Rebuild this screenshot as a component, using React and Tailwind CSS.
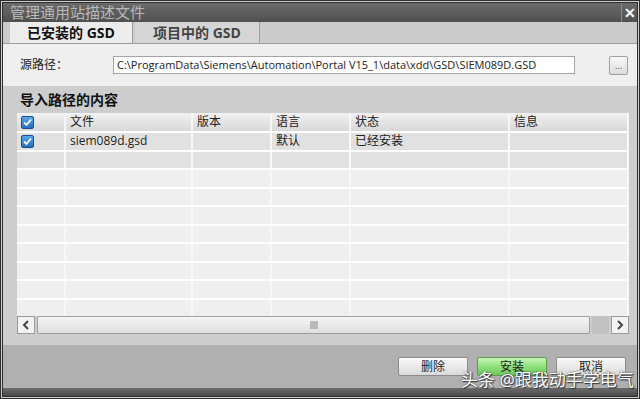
import React from 'react';

const FONT = { fontFamily: '"Open Sans", "Noto Sans CJK SC", sans-serif' };

const columns = [
  { key: 'check', label: '', width: 'w-[49px]' },
  { key: 'file', label: '文件', width: 'w-[127px]' },
  { key: 'version', label: '版本', width: 'w-[79px]' },
  { key: 'lang', label: '语言', width: 'w-[79px]' },
  { key: 'state', label: '状态', width: 'w-[159px]' },
  { key: 'info', label: '信息', width: 'flex-1' },
];

const rows = [
  { file: 'siem089d.gsd', version: '', lang: '默认', state: '已经安装', info: '', checked: true },
  { empty: true, dark: true },
  ...Array.from({ length: 8 }, () => ({ empty: true })),
];

function CheckBox() {
  return (
    <span className="flex h-[13px] w-[13px] items-center justify-center rounded-[2px] border border-[#1d4f8a] bg-gradient-to-b from-[#5aa6e6] to-[#1f6fc2]">
      <svg width="9" height="9" viewBox="0 0 9 9">
        <path d="M1 4.5 L3.5 7 L8 1.5" stroke="#fff" strokeWidth="1.8" fill="none" />
      </svg>
    </span>
  );
}

function FooterButton({ label, green }) {
  return (
    <button
      className={`flex h-[19px] w-[70px] items-center justify-center rounded-[2px] border text-[12px] text-[#222] ${
        green
          ? 'border-[#5c9a4e] bg-gradient-to-b from-[#c9f5b8] via-[#8fe07a] to-[#6cc95a]'
          : 'border-[#8c8c8c] bg-gradient-to-b from-[#fbfbfb] to-[#d9d9d9]'
      }`}
    >
      {label}
    </button>
  );
}

export default function App() {
  return (
    <div className="relative h-[399px] w-[640px] overflow-hidden border-[3px] border-double border-[#2e2e2e] bg-[#cdcdcd]" style={FONT}>
      {/* title bar */}
      <div className="flex h-[19px] items-center justify-between bg-gradient-to-b from-[#6a6a6a] to-[#505050]">
        <span className="pl-[7px] text-[15px] leading-none text-[#b9b9b9]">管理通用站描述文件</span>
        <span className="flex h-[19px] w-[16px] items-center justify-center border-l border-[#8a8a8a] text-[14px] font-bold text-white">✕</span>
      </div>

      {/* tabs */}
      <div className="flex h-[22px] items-end border-b border-[#9e9e9e] bg-[#cbcbcb] pl-[7px]">
        <div className="flex h-[21px] w-[123px] items-center justify-center border-r border-[#9e9e9e] bg-[#ececec] text-[14px] font-bold text-[#111]">
          已安装的 GSD
        </div>
        <div className="ml-[2px] flex h-[21px] w-[125px] items-center justify-center border-r border-[#9e9e9e] bg-[#d6d6d6] text-[14px] font-bold text-[#444]">
          项目中的 GSD
        </div>
      </div>

      {/* source path */}
      <div className="flex h-[42px] items-center bg-[#efefef] pl-[17px]">
        <span className="w-[93px] text-[12px] text-[#222]">源路径：</span>
        <div className="flex h-[18px] w-[462px] items-center border border-[#a5a5a5] bg-white px-[3px] text-[11px] text-[#222]">
          C:\ProgramData\Siemens\Automation\Portal V15_1\data\xdd\GSD\SIEM089D.GSD
        </div>
        <div className="ml-[34px] flex h-[19px] w-[19px] items-center justify-center rounded-[2px] border border-[#a0a0a0] bg-gradient-to-b from-[#fafafa] to-[#dcdcdc] text-[9px] leading-none text-[#555]">
          ...
        </div>
      </div>

      {/* content panel */}
      <div className="flex h-[259px] flex-col bg-[#cdcdcd] pl-[14px] pr-[8px]">
        <div className="flex h-[27px] items-center pl-[3px] text-[14px] font-bold text-[#111]">导入路径的内容</div>
        <div className="flex flex-col bg-[#efefef]">
          <div className="flex h-[18px] bg-gradient-to-b from-[#f2f2f2] to-[#d8d8d8] text-[12px] text-[#222]">
            {columns.map((c) => (
              <div key={c.key} className={`${c.width} flex items-center border-r-2 border-[#f7f7f7] px-[4px]`}>
                {c.key === 'check' ? <CheckBox /> : c.label}
              </div>
            ))}
          </div>
          <div className="h-[185px] overflow-hidden">
            {rows.map((r, i) => (
              <div
                key={i}
                className={`flex h-[18.5px] border-t-2 border-white text-[12px] text-[#222] ${i < 2 ? 'bg-[#e1e1e1]' : 'bg-[#efefef]'}`}
              >
                {columns.map((c) => (
                  <div key={c.key} className={`${c.width} flex items-center border-r-2 border-[#f8f8f8] px-[4px]`}>
                    {r.empty ? '' : c.key === 'check' ? <CheckBox /> : r[c.key]}
                  </div>
                ))}
              </div>
            ))}
          </div>
        </div>

        {/* horizontal scrollbar */}
        <div className="flex h-[18px] items-stretch gap-[2px]">
          <div className="flex w-[18px] items-center justify-center border border-[#9a9a9a] bg-[#f3f3f3] text-[#444]">
            <svg width="8" height="10" viewBox="0 0 8 10">
              <path d="M6 1 L2 5 L6 9" stroke="#444" strokeWidth="2" fill="none" />
            </svg>
          </div>
          <div className="flex w-[553px] items-center justify-center rounded-[2px] border border-[#9f9f9f] bg-gradient-to-b from-[#f6f6f6] to-[#dedede]">
            <svg width="8" height="8" viewBox="0 0 8 8">
              <path d="M1 0 V8 M3 0 V8 M5 0 V8 M7 0 V8" stroke="#8a8a8a" strokeWidth="1" />
            </svg>
          </div>
          <div className="flex-1 bg-[#c2c2c2]" />
          <div className="flex w-[18px] items-center justify-center border border-[#9a9a9a] bg-[#f3f3f3]">
            <svg width="8" height="10" viewBox="0 0 8 10">
              <path d="M2 1 L6 5 L2 9" stroke="#444" strokeWidth="2" fill="none" />
            </svg>
          </div>
        </div>
      </div>

      {/* footer */}
      <div className="flex h-[43px] items-center justify-end gap-[9px] bg-[#b0b0b0] pr-[11px]">
        <FooterButton label="删除" />
        <FooterButton label="安装" green />
        <FooterButton label="取消" />
      </div>
      <div className="h-[8px] bg-gradient-to-b from-[#6d6d6d] to-[#4a4a4a]" />

      {/* watermark */}
      <div
        className="absolute left-[458px] top-[368px] text-[17px] leading-none text-white"
        style={{ textShadow: '0 0 2px #333, 1px 1px 1px #333' }}
      >
        头条 @跟我动手学电气
      </div>
    </div>
  );
}
